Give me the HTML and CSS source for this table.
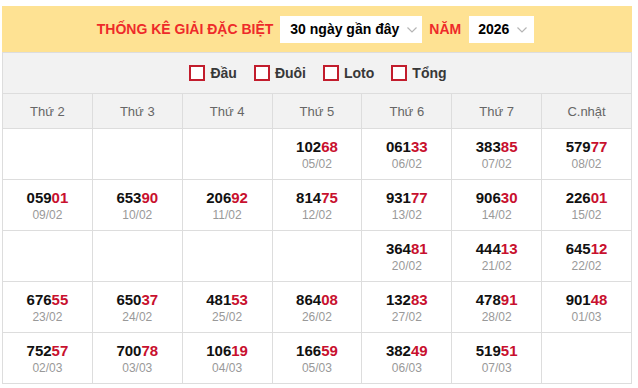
FILE: index.html
```html
<!DOCTYPE html>
<html lang="vi">
<head>
<meta charset="utf-8">
<title>Thống kê giải đặc biệt</title>
<link rel="stylesheet" href="styles.css">
</head>
<body>
<div class="wrap">
  <div class="head">
    <span class="title">THỐNG KÊ GIẢI ĐẶC BIỆT</span>
    <div class="select sel-range">30 ngày gần đây<svg class="chev" width="10" height="6" viewBox="0 0 10 6"><polyline points="0.5,0.5 5,5 9.5,0.5" fill="none" stroke="#b5b5b5" stroke-width="1.2"/></svg></div>
    <span class="title">NĂM</span>
    <div class="select sel-year">2026<svg class="chev" width="10" height="6" viewBox="0 0 10 6"><polyline points="0.5,0.5 5,5 9.5,0.5" fill="none" stroke="#b5b5b5" stroke-width="1.2"/></svg></div>
  </div>
  <div class="filters">
    <label class="opt"><span class="box"></span>Đầu</label>
    <label class="opt"><span class="box"></span>Đuôi</label>
    <label class="opt"><span class="box"></span>Loto</label>
    <label class="opt"><span class="box"></span>Tổng</label>
  </div>
  <table class="grid">
    <thead>
      <tr><th>Thứ 2</th><th>Thứ 3</th><th>Thứ 4</th><th>Thứ 5</th><th>Thứ 6</th><th>Thứ 7</th><th>C.nhật</th></tr>
    </thead>
    <tbody>
      <tr>
        <td></td><td></td><td></td>
        <td><div class="num">102<em>68</em></div><div class="date">05/02</div></td>
        <td><div class="num">061<em>33</em></div><div class="date">06/02</div></td>
        <td><div class="num">383<em>85</em></div><div class="date">07/02</div></td>
        <td><div class="num">579<em>77</em></div><div class="date">08/02</div></td>
      </tr>
      <tr>
        <td><div class="num">059<em>01</em></div><div class="date">09/02</div></td>
        <td><div class="num">653<em>90</em></div><div class="date">10/02</div></td>
        <td><div class="num">206<em>92</em></div><div class="date">11/02</div></td>
        <td><div class="num">814<em>75</em></div><div class="date">12/02</div></td>
        <td><div class="num">931<em>77</em></div><div class="date">13/02</div></td>
        <td><div class="num">906<em>30</em></div><div class="date">14/02</div></td>
        <td><div class="num">226<em>01</em></div><div class="date">15/02</div></td>
      </tr>
      <tr>
        <td></td><td></td><td></td><td></td>
        <td><div class="num">364<em>81</em></div><div class="date">20/02</div></td>
        <td><div class="num">444<em>13</em></div><div class="date">21/02</div></td>
        <td><div class="num">645<em>12</em></div><div class="date">22/02</div></td>
      </tr>
      <tr>
        <td><div class="num">676<em>55</em></div><div class="date">23/02</div></td>
        <td><div class="num">650<em>37</em></div><div class="date">24/02</div></td>
        <td><div class="num">481<em>53</em></div><div class="date">25/02</div></td>
        <td><div class="num">864<em>08</em></div><div class="date">26/02</div></td>
        <td><div class="num">132<em>83</em></div><div class="date">27/02</div></td>
        <td><div class="num">478<em>91</em></div><div class="date">28/02</div></td>
        <td><div class="num">901<em>48</em></div><div class="date">01/03</div></td>
      </tr>
      <tr>
        <td><div class="num">752<em>57</em></div><div class="date">02/03</div></td>
        <td><div class="num">700<em>78</em></div><div class="date">03/03</div></td>
        <td><div class="num">106<em>19</em></div><div class="date">04/03</div></td>
        <td><div class="num">166<em>59</em></div><div class="date">05/03</div></td>
        <td><div class="num">382<em>49</em></div><div class="date">06/03</div></td>
        <td><div class="num">519<em>51</em></div><div class="date">07/03</div></td>
        <td></td>
      </tr>
    </tbody>
  </table>
</div>
</body>
</html>
```
FILE: styles.css
```css
html, body {
  margin: 0;
  padding: 0;
  background: #ffffff;
}
body {
  font-family: "Liberation Sans", Arial, sans-serif;
  padding: 6px 6px 0 2px;
}
.wrap {
  width: 630px;
}
.head {
  height: 46px;
  background: #fee293;
  display: flex;
  align-items: center;
  justify-content: center;
  padding-right: 3px;
}
.title {
  color: #ee2a2a;
  font-weight: bold;
  font-size: 14px;
}
.select {
  background: #ffffff;
  height: 27px;
  display: flex;
  align-items: center;
  font-size: 14px;
  font-weight: bold;
  color: #000;
  box-sizing: border-box;
}
.sel-range {
  width: 142px;
  padding-left: 10px;
  margin: 0 7px;
}
.sel-year {
  width: 65px;
  padding-left: 9px;
  margin-left: 8px;
}
.chev {
  margin-left: 8px;
  margin-top: 1px;
}
.filters {
  height: 40px;
  background: #f2f2f2;
  border: 1px solid #dddddd;
  border-bottom: none;
  display: flex;
  align-items: center;
  justify-content: center;
  gap: 17px;
  padding-left: 2px;
}
.opt {
  display: flex;
  align-items: center;
  font-size: 14px;
  font-weight: bold;
  color: #383838;
}
.box {
  width: 16px;
  height: 16px;
  box-sizing: border-box;
  border: 2px solid #c21d2d;
  background: #ffffff;
  margin-right: 5px;
}
.grid {
  width: 630px;
  border-collapse: collapse;
  table-layout: fixed;
}
.grid th, .grid td {
  border: 1px solid #dddddd;
  text-align: center;
  vertical-align: middle;
  padding: 0;
}
.grid th {
  height: 34px;
  background: #f2f2f2;
  font-weight: normal;
  font-size: 13px;
  color: #666666;
}
.grid td {
  height: 50px;
  background: #ffffff;
}
.num {
  font-size: 15px;
  font-weight: bold;
  line-height: 18px;
  color: #111111;
  margin-top: 1px;
}
.num em {
  font-style: normal;
  color: #c8102e;
}
.date {
  font-size: 12px;
  line-height: 16px;
  color: #999999;
}
```
